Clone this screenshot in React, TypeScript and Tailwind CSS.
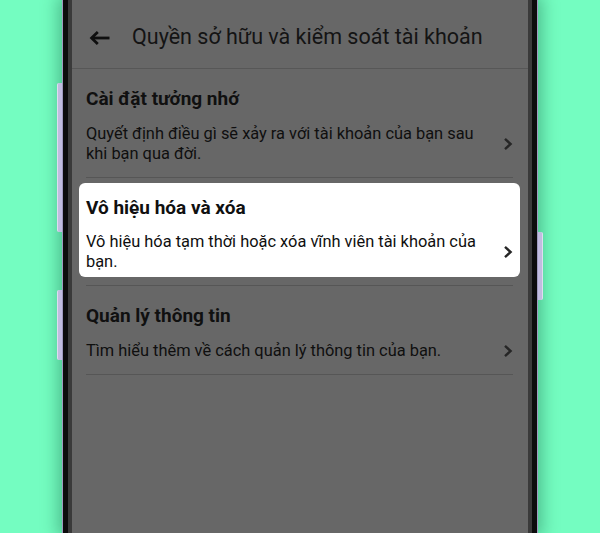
import React from "react";

const Chevron = () => (
  <svg width="10" height="14" viewBox="0 0 10 14" className="shrink-0">
    <path d="M2 1.8 L7.6 7 L2 12.2" fill="none" stroke="#262626" strokeWidth="2.4" />
  </svg>
);

const BackArrow = () => (
  <svg width="21" height="14" viewBox="0 0 21 14">
    <path d="M20.5 7H2.8" fill="none" stroke="#0f0f0f" strokeWidth="2.8" />
    <path d="M8.8 1 L2.6 7 L8.8 13" fill="none" stroke="#0f0f0f" strokeWidth="2.8" />
  </svg>
);

type Item = { title: string; lines: string[]; highlight?: boolean };

const items: Item[] = [
  {
    title: "Cài đặt tưởng nhớ",
    lines: ["Quyết định điều gì sẽ xảy ra với tài khoản của bạn sau", "khi bạn qua đời."],
  },
  {
    title: "Vô hiệu hóa và xóa",
    lines: ["Vô hiệu hóa tạm thời hoặc xóa vĩnh viên tài khoản của", "bạn."],
    highlight: true,
  },
  {
    title: "Quản lý thông tin",
    lines: ["Tìm hiểu thêm về cách quản lý thông tin của bạn."],
  },
];

function Row({ item }: { item: Item }) {
  const body = (
    <>
      <div className="text-[19px] leading-[24px] font-bold text-[#101010]">{item.title}</div>
      <div className="flex items-center justify-between">
        <div className="text-[16.4px] leading-[20px] text-[#0f0f0f] whitespace-nowrap">
          {item.lines.map((l) => (
            <div key={l}>{l}</div>
          ))}
        </div>
        <Chevron />
      </div>
    </>
  );
  if (item.highlight) {
    return (
      <div className="border-b border-[#565656] pt-[5px] pb-[8px]">
        <div className="-mx-[7px] px-[7px] bg-white rounded-[6px] pt-[13px] pb-[5px] flex flex-col gap-[12px]">
          {body}
        </div>
      </div>
    );
  }
  return (
    <div className="border-b border-[#565656] pt-[18px] pb-[13px] flex flex-col gap-[13px]">{body}</div>
  );
}

export default function App() {
  return (
    <div
      className="w-[600px] h-[533px] bg-[#74fdc1] overflow-hidden flex pl-[62px]"
      style={{ fontFamily: "Roboto, 'Noto Sans', sans-serif" }}
    >
      <div className="relative w-[476px] h-[533px] border-x-[1.5px] border-[#9f9abf] shadow-[0_0_16px_4px_rgba(0,70,40,0.35)]">
        {/* side buttons */}
        <div className="absolute left-[-6px] top-[83px] w-[5px] h-[149px] bg-[#c1bce0] border-l border-[#dedcf0] rounded-l-[2px]" />
        <div className="absolute left-[-6px] top-[290px] w-[5px] h-[70px] bg-[#c1bce0] border-l border-[#dedcf0] rounded-l-[2px]" />
        <div className="absolute right-[-6px] top-[232px] w-[5px] h-[68px] bg-[#c1bce0] border-r border-[#dedcf0] rounded-r-[2px]" />
        <div className="h-full border-x-[5px] border-[#0c0c0c]">
          <div className="h-full border-x-[4px] border-[#3a3a3a] bg-[#676767] flex flex-col">
            <div className="h-[69px] shrink-0 border-b border-[#575757] flex items-center pt-[7px] pl-[17px]">
              <BackArrow />
              <span className="ml-[22px] text-[21.5px] text-[#141414] whitespace-nowrap">
                Quyền sở hữu và kiểm soát tài khoản
              </span>
            </div>
            <div className="pl-[14px] pr-[15px]">
              {items.map((it) => (
                <Row key={it.title} item={it} />
              ))}
            </div>
          </div>
        </div>
      </div>
    </div>
  );
}
